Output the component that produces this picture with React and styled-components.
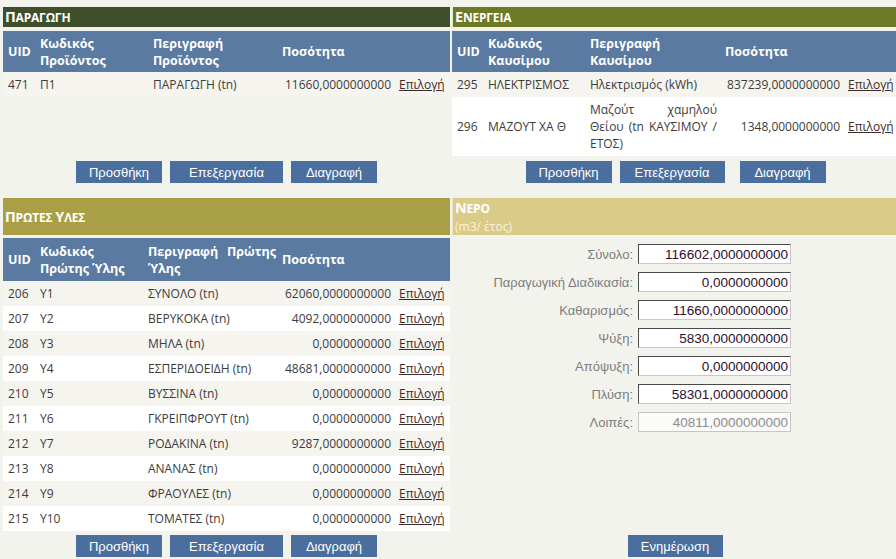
import React from "react";
import styled, { createGlobalStyle } from "styled-components";

const GlobalStyle = createGlobalStyle`
  body {
    margin: 0;
    background: #f3f3ee;
    font-family: "Open Sans", "DejaVu Sans", sans-serif;
  }
`;

const production = [
  { uid: 471, code: "Π1", desc: "ΠΑΡΑΓΩΓΗ (tn)", qty: "11660,0000000000" },
];

const energy = [
  { uid: 295, code: "ΗΛΕΚΤΡΙΣΜΟΣ", desc: "Ηλεκτρισμός (kWh)", qty: "837239,0000000000" },
  { uid: 296, code: "ΜΑΖΟΥΤ ΧΑ Θ", desc: "Μαζούτ χαμηλού Θείου (tn ΚΑΥΣΙΜΟΥ / ΕΤΟΣ)", qty: "1348,0000000000" },
];

const materials = [
  { uid: 206, code: "Υ1", desc: "ΣΥΝΟΛΟ (tn)", qty: "62060,0000000000" },
  { uid: 207, code: "Υ2", desc: "ΒΕΡΥΚΟΚΑ (tn)", qty: "4092,0000000000" },
  { uid: 208, code: "Υ3", desc: "ΜΗΛΑ (tn)", qty: "0,0000000000" },
  { uid: 209, code: "Υ4", desc: "ΕΣΠΕΡΙΔΟΕΙΔΗ (tn)", qty: "48681,0000000000" },
  { uid: 210, code: "Υ5", desc: "ΒΥΣΣΙΝΑ (tn)", qty: "0,0000000000" },
  { uid: 211, code: "Υ6", desc: "ΓΚΡΕΙΠΦΡΟΥΤ (tn)", qty: "0,0000000000" },
  { uid: 212, code: "Υ7", desc: "ΡΟΔΑΚΙΝΑ (tn)", qty: "9287,0000000000" },
  { uid: 213, code: "Υ8", desc: "ΑΝΑΝΑΣ (tn)", qty: "0,0000000000" },
  { uid: 214, code: "Υ9", desc: "ΦΡΑΟΥΛΕΣ (tn)", qty: "0,0000000000" },
  { uid: 215, code: "Υ10", desc: "ΤΟΜΑΤΕΣ (tn)", qty: "0,0000000000" },
];

const water = [
  { label: "Σύνολο:", value: "116602,0000000000" },
  { label: "Παραγωγική Διαδικασία:", value: "0,0000000000" },
  { label: "Καθαρισμός:", value: "11660,0000000000" },
  { label: "Ψύξη:", value: "5830,0000000000" },
  { label: "Απόψυξη:", value: "0,0000000000" },
  { label: "Πλύση:", value: "58301,0000000000" },
  { label: "Λοιπές:", value: "40811,0000000000", disabled: true },
];

export default function App() {
  return (
    <>
      <GlobalStyle />
      <Page>
        <Section $mb={15}>
          <TitleBar $bg="#404f2b">
            <Caps text="ΠΑΡΑΓΩΓΗ" />
          </TitleBar>
          <TitleBar $bg="#6e7925" $right>
            <Caps text="ΕΝΕΡΓΕΙΑ" />
          </TitleBar>

          <DataTable
            top={4}
            headH={41}
            cols={[32, 113, 129, 118, 55]}
            head={["UID", "Κωδικός Προϊόντος", "Περιγραφή Προϊόντος", "Ποσότητα"]}
            rows={production}
          />
          <RightCell>
            <DataTable
              top={4}
              headH={41}
              cols={[31, 102, 135, 124, 52]}
              head={["UID", "Κωδικός Καυσίμου", "Περιγραφή Καυσίμου", "Ποσότητα"]}
              rows={energy}
            />
          </RightCell>

          <ButtonRow>
            <Button $w={86}>Προσθήκη</Button>
            <Button $w={113}>Επεξεργασία</Button>
            <Button $w={86}>Διαγραφή</Button>
          </ButtonRow>
          <ButtonRow $shift={3}>
            <Button $w={86}>Προσθήκη</Button>
            <Button $w={105}>Επεξεργασία</Button>
            <Button $w={86} $ml={7}>Διαγραφή</Button>
          </ButtonRow>
        </Section>

        <Section>
          <TitleBar $bg="#a99f44" $center>
            <Caps text="ΠΡΩΤΕΣ ΥΛΕΣ" />
          </TitleBar>
          <TitleBar $bg="#dbcb88" $right>
            <Caps text="ΝΕΡΟ" />
            <Unit>(m3/ έτος)</Unit>
          </TitleBar>

          <DataTable
            top={3}
            headH={43}
            cols={[32, 108, 134, 118, 55]}
            head={["UID", "Κωδικός Πρώτης Ύλης", "Περιγραφή Πρώτης Ύλης", "Ποσότητα"]}
            rows={materials}
          />
          <RightCell>
            <WaterForm>
              {water.map((w) => (
                <React.Fragment key={w.label}>
                  <FieldLabel>{w.label}</FieldLabel>
                  <Field defaultValue={w.value} readOnly disabled={w.disabled} />
                </React.Fragment>
              ))}
            </WaterForm>
          </RightCell>

          <ButtonRow $top={4}>
            <Button $w={86}>Προσθήκη</Button>
            <Button $w={113}>Επεξεργασία</Button>
            <Button $w={86}>Διαγραφή</Button>
          </ButtonRow>
          <ButtonRow $top={4} $shift={2}>
            <Button $w={95}>Ενημέρωση</Button>
          </ButtonRow>
        </Section>
      </Page>
    </>
  );
}

function Caps({ text }) {
  return (
    <CapsLine>
      {text.split(" ").map((word, i) => (
        <React.Fragment key={i}>
          {i > 0 && " "}
          <Big>{word[0]}</Big>
          {word.slice(1)}
        </React.Fragment>
      ))}
    </CapsLine>
  );
}

function DataTable({ top, headH, cols, head, rows }) {
  return (
    <Table $top={top}>
      <colgroup>
        {cols.map((c, i) => (
          <col key={i} style={{ width: c }} />
        ))}
      </colgroup>
      <thead>
        <tr>
          {head.map((h, i) => (
            <Th key={i} $h={headH} $justify={i === 2}>
              {h}
            </Th>
          ))}
          <Th $h={headH} />
        </tr>
      </thead>
      <tbody>
        {rows.map((r, i) => (
          <Row key={r.uid} $alt={i % 2 === 1}>
            <Td>{r.uid}</Td>
            <Td>{r.code}</Td>
            <Td $justify>{r.desc}</Td>
            <Td $right>{r.qty}</Td>
            <Td $link>
              <Choose href="#">Επιλογή</Choose>
            </Td>
          </Row>
        ))}
      </tbody>
    </Table>
  );
}

const Page = styled.div`
  width: 896px;
  height: 559px;
  overflow: hidden;
  padding: 7px 0 0 3px;
  box-sizing: border-box;
`;

const Section = styled.section`
  display: grid;
  grid-template-columns: 447px 444px;
  grid-template-rows: auto auto auto;
  column-gap: 2px;
  margin-bottom: ${(p) => p.$mb || 0}px;
`;

const TitleBar = styled.div`
  background: ${(p) => p.$bg};
  color: #fff;
  min-height: 20px;
  padding: 1px 2px 0;
  box-sizing: border-box;
  display: flex;
  flex-direction: column;
  justify-content: ${(p) => (p.$center ? "center" : "flex-start")};
  border-left: ${(p) => (p.$right ? "1px solid #e9e4c4" : "none")};
`;

const CapsLine = styled.div`
  font-weight: 700;
  font-size: 12px;
  line-height: 18px;
  letter-spacing: -0.2px;
  white-space: pre;
`;

const Big = styled.span`
  font-size: 14.5px;
`;

const Unit = styled.div`
  font-size: 12px;
  line-height: 17px;
  color: #f8f3de;
`;

const RightCell = styled.div`
  display: flex;
  flex-direction: column;
`;

const Table = styled.table`
  width: 100%;
  table-layout: fixed;
  border-collapse: collapse;
  margin-top: ${(p) => p.$top}px;
  align-self: start;
`;

const Th = styled.th`
  background: #5a7aa1;
  color: #fff;
  font-size: 12.5px;
  font-weight: 700;
  text-align: ${(p) => (p.$justify ? "justify" : "left")};
  line-height: 17px;
  height: ${(p) => p.$h}px;
  padding: 3px 1px 3px 5px;
  box-sizing: border-box;
  vertical-align: middle;
`;

const Row = styled.tr`
  background: ${(p) => (p.$alt ? "#ffffff" : "#f5f4ef")};
`;

const Td = styled.td`
  font-size: 12px;
  line-height: 17px;
  color: #3c3c3c;
  padding: 4px ${(p) => (p.$right ? 4 : 3)}px 4px ${(p) => (p.$link ? 4 : 5)}px;
  text-align: ${(p) => (p.$right ? "right" : p.$justify ? "justify" : "left")};
  vertical-align: middle;
  white-space: ${(p) => (p.$right || p.$link ? "nowrap" : "normal")};
`;

const Choose = styled.a`
  color: #3d2a2a;
  text-decoration: underline;
`;

const ButtonRow = styled.div`
  display: flex;
  justify-content: center;
  gap: 8px;
  padding-top: ${(p) => p.$top || 5}px;
  padding-left: ${(p) => p.$shift || 0}px;
`;

const Button = styled.button`
  width: ${(p) => p.$w}px;
  height: 22px;
  margin-left: ${(p) => p.$ml || 0}px;
  padding: 0;
  border: 0;
  background: #4a6e9e;
  color: #fff;
  font-family: "Liberation Sans", Arial, sans-serif;
  font-size: 13px;
  cursor: pointer;
`;

const WaterForm = styled.div`
  display: grid;
  grid-template-columns: 181px 153px;
  column-gap: 5px;
  row-gap: 8px;
  margin-top: 9px;
`;

const FieldLabel = styled.label`
  font-family: "Liberation Sans", Arial, sans-serif;
  font-size: 13px;
  color: #7d7d7d;
  text-align: right;
  align-self: center;
`;

const Field = styled.input`
  height: 20px;
  box-sizing: border-box;
  padding: 0 2px;
  text-align: right;
  font-family: "Liberation Sans", Arial, sans-serif;
  font-size: 13.5px;
  color: #2e102e;
  background: #fff;
  border: 1px solid #c8c8c8;
  border-top-color: #4a4a4a;
  border-left-color: #4a4a4a;
  outline: none;

  &:disabled {
    color: #8c8c8c;
    border-color: #c6c6c6;
    background: #fbfbf9;
  }
`;
